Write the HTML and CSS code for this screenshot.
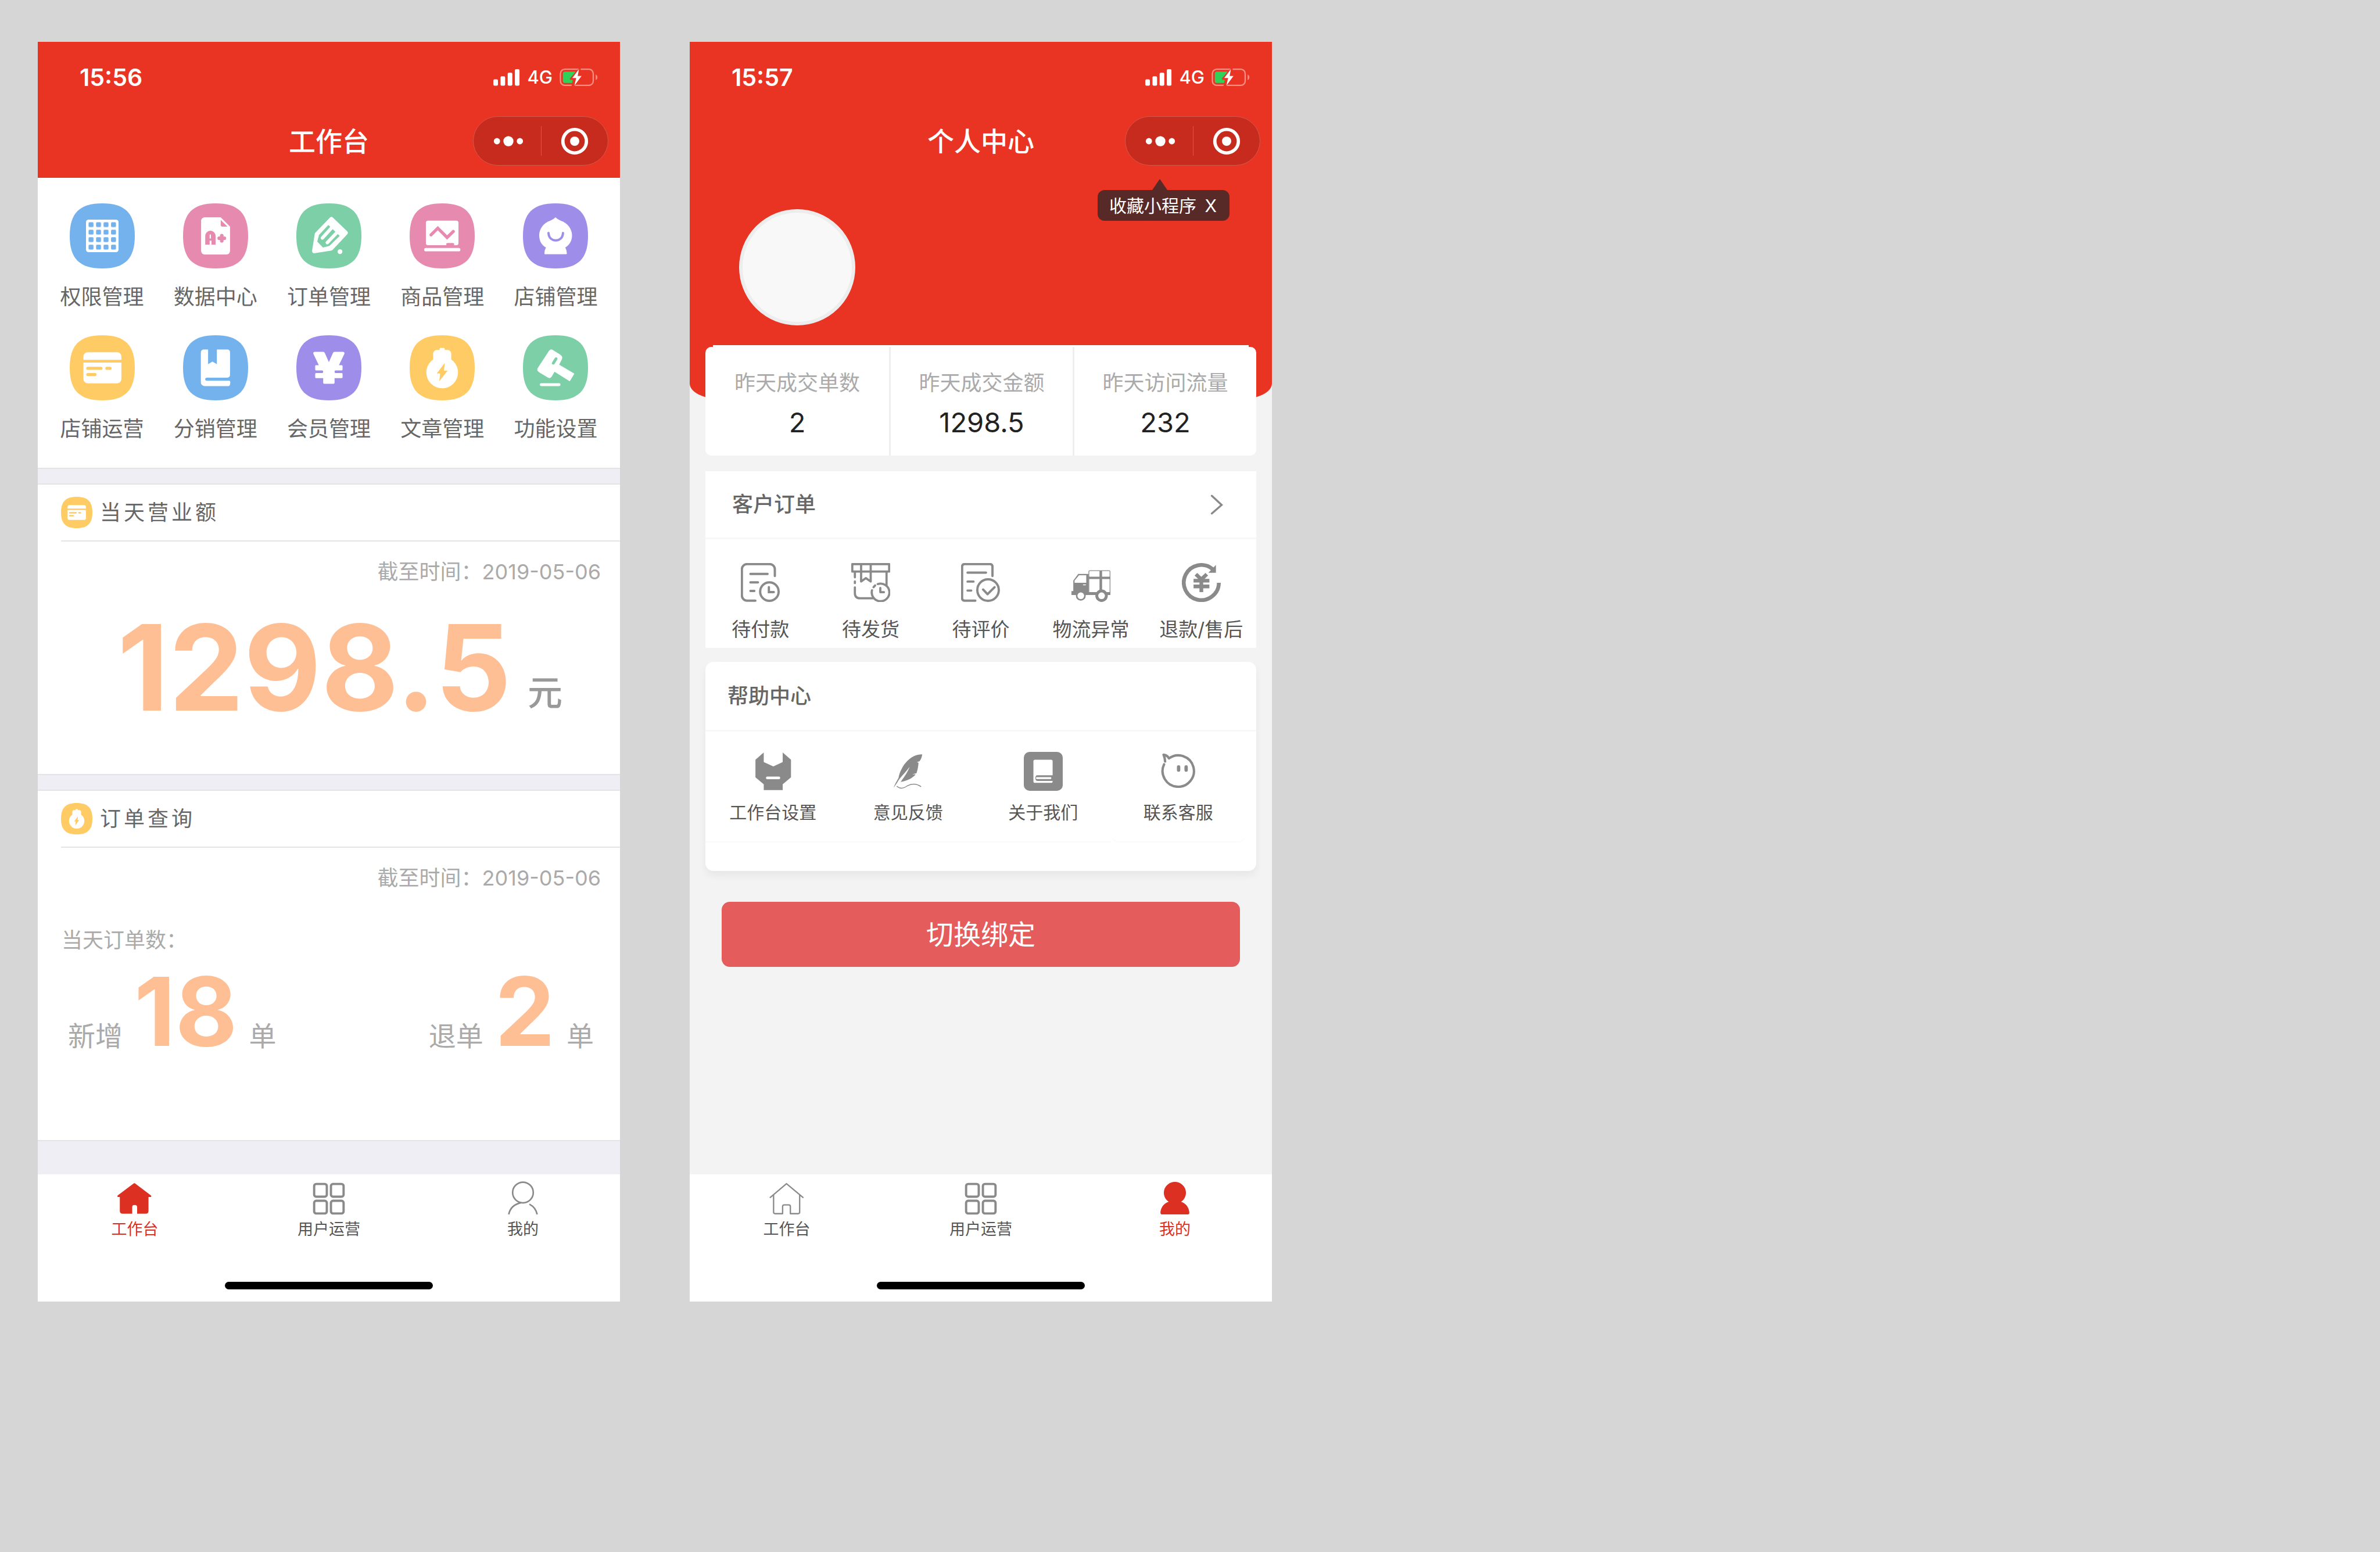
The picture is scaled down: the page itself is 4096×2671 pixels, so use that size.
FILE: index.html
```html
<!DOCTYPE html>
<html lang="zh-CN">
<head>
<meta charset="utf-8">
<title>工作台 · 个人中心</title>
<link rel="stylesheet" href="styles.css">
</head>
<body>
<svg class="sprite" aria-hidden="true">
  <defs>
    <pattern id="cells" x="36.5" y="36.5" width="14.5" height="14.5" patternUnits="userSpaceOnUse">
      <rect width="9.6" height="9.6" rx="2" fill="#73b2ed"/>
    </pattern>
  </defs>
  <symbol id="squircle" viewBox="0 0 126 126"><path d="M63 0C107 0 126 19 126 63S107 126 63 126 0 107 0 63 19 0 63 0Z"/></symbol>
  <symbol id="i-grid" viewBox="0 0 126 126">
    <rect x="31.5" y="31.5" width="63" height="63" rx="5" fill="#fff"/>
    <rect x="36" y="36" width="55" height="55" fill="url(#cells)"/>
  </symbol>
  <symbol id="i-file" viewBox="0 0 126 126">
    <path d="M42 27H73L91 45V92a7 7 0 0 1-7 7H42a7 7 0 0 1-7-7V34a7 7 0 0 1 7-7Z" fill="#fff"/>
    <path d="M73 32L86 45H76q-3 0-3-3Z" fill="currentColor"/>
    <path d="M43 80V63a10 10 0 0 1 20 0V80H55V72H51.500V80ZM51.500 61V68H54V61Q52.700 59 51.500 61Z" fill="currentColor" fill-rule="evenodd"/>
    <path d="M70 67.500H80M75 62.500V72.500" fill="none" stroke="currentColor" stroke-width="7" stroke-linecap="round"/>
  </symbol>
  <symbol id="i-pencil" viewBox="0 0 126 126">
    <path d="M68 31L95 57 67 87 35 92 40 60Z" fill="#fff" stroke="#fff" stroke-width="9" stroke-linejoin="round"/>
    <path d="M44 61L62 42 84 63 64 82.500 51.500 85.500 40.500 74Z" fill="currentColor"/>
    <path d="M50.500 67L71 44.500M60 76L81 54" stroke="#fff" stroke-width="6.500" stroke-linecap="round"/>
    <circle cx="84.500" cy="93.500" r="4.700" fill="#fff"/>
  </symbol>
  <symbol id="i-board" viewBox="0 0 126 126">
    <rect x="31.500" y="33.500" width="63" height="47.500" rx="4" fill="#fff"/>
    <path d="M41.500 61L54.500 48 72.500 66 84.500 54.500" fill="none" stroke="currentColor" stroke-width="6" stroke-linecap="round"/>
    <path d="M73 79H84" stroke="currentColor" stroke-width="4.500" stroke-linecap="round"/>
    <path d="M31.500 89.700H95" stroke="#fff" stroke-width="6.500" stroke-linecap="round"/>
  </symbol>
  <symbol id="i-shop" viewBox="0 0 126 126">
    <path d="M63 27Q67 31 73 33.500C87 38 95 50 95 62 95 73 90 81 82 85.500Q85 91 85 97 85 98.500 83.500 98.500H43Q41.500 98.500 41.500 97 41.500 91 44.500 85.500C36 81 31.500 73 31.500 62 31.500 50 39 38 53 33.500Q59 31 63 27Z" fill="#fff"/>
    <path d="M49.500 57.500C50 76.500 77 76.500 77.500 57.500" fill="none" stroke="currentColor" stroke-width="4.500" stroke-linecap="round"/>
  </symbol>
  <symbol id="i-card" viewBox="0 0 126 126">
    <path d="M26.500 47.500V41a8 8 0 0 1 8-8H92a8 8 0 0 1 8 8V47.500ZM26.500 53H100V85a8 8 0 0 1-8 8H34.500a8 8 0 0 1-8-8Z" fill="#fff"/>
    <path d="M35 64H60.500M72 64H78M35 76H49" stroke="currentColor" stroke-width="6" stroke-linecap="round"/>
  </symbol>
  <symbol id="i-book" viewBox="0 0 126 126">
    <path d="M40 27.500H48.500V56L57 51 65.500 56V27.500H86a5 5 0 0 1 5 5V77a5 5 0 0 1-5 5H46a3 3 0 0 0 0 6H89.500Q91.500 88 91.500 90.500 91.500 98.500 87.500 98.500H42a7.500 7.500 0 0 1-7.500-7.500V33a5.500 5.500 0 0 1 5.500-5.500Z" fill="#fff"/>
  </symbol>
  <symbol id="i-yen" viewBox="0 0 126 126">
    <path d="M36 32H52q2 0 3 2L63 52 71 34q1-2 3-2H90q4 0 3 4L82.500 58H88q1.500 0 1.500 2V66q0 2-1.500 2H76q-2 0-2 2.500T76 73H88q1.500 0 1.500 2V81q0 2-1.500 2H74V92q0 2-2 2H54q-2 0-2-2V83H38q-1.500 0-1.500-2V75q0-2 1.500-2H50q2 0 2-2.500T50 68H38q-1.500 0-1.500-2V60q0-2 1.500-2H43.500L33 36q-1-4 3-4Z" fill="#fff"/>
  </symbol>
  <symbol id="i-bulb" viewBox="0 0 126 126">
    <circle cx="63" cy="72" r="30.700" fill="#fff"/>
    <path d="M45.500 50V35.500a7 7 0 0 1 7-7H58V26.500a2 2 0 0 1 2-2H66a2 2 0 0 1 2 2V28.500H73.500a7 7 0 0 1 7 7V50Z" fill="#fff"/>
    <path d="M68 53.500L52.500 74H59L57.500 89 73.500 68.500H66.500Z" fill="currentColor"/>
  </symbol>
  <symbol id="i-gavel" viewBox="0 0 126 126">
    <path d="M51 30Q53.500 26.500 57 28.500L73 38.500Q77 41.500 75 46.500L69.500 57 99 74.500 90.500 88.500 61 70 55.500 79.500Q53 84 48.500 81.500L31 71Q27 68.500 28.500 64.500Z" fill="#fff" stroke="#fff" stroke-linejoin="round"/>
    <path d="M64 45.500L58.800 54" stroke="currentColor" stroke-width="5.500" stroke-linecap="round"/>
    <path d="M35.500 95.700H70" stroke="#fff" stroke-width="5.600" stroke-linecap="round"/>
  </symbol>
  <symbol id="i-signal" viewBox="0 0 52 34">
    <g fill="#fff"><rect y="21" width="9" height="12.500" rx="2.500"/><rect x="14" y="15" width="9" height="18.500" rx="2.500"/><rect x="28" y="8" width="9" height="25.500" rx="2.500"/><rect x="42" y="1" width="9" height="32.500" rx="2.500"/></g>
  </symbol>
  <symbol id="i-battery" viewBox="0 0 74 34">
    <rect x="1.300" y="1.300" width="64" height="31.400" rx="8.500" fill="none" stroke="#f58f86" stroke-width="2.600"/>
    <path d="M70 11.500Q73.500 13 73.500 17T70 22.500Z" fill="#f58f86"/>
    <path d="M10 6H31L20 22H27V28H10q-4 0-4-4V10q0-4 4-4Z" fill="#30d158"/>
    <path d="M37 0L19 20H26L23 34H29L46 13H39L41 0Z" fill="#e93323"/>
    <path d="M37.500 1L24.500 18.500H32L28.500 33.500 42.500 14.500H35Z" fill="#fff"/>
  </symbol>
  <symbol id="i-more" viewBox="0 0 58 20"><g fill="#fff"><circle cx="7" cy="10" r="6"/><circle cx="29" cy="10" r="9.700"/><circle cx="51" cy="10" r="6"/></g></symbol>
  <symbol id="i-target" viewBox="0 0 54 54"><circle cx="27" cy="27" r="22.800" fill="none" stroke="#fff" stroke-width="6.400"/><circle cx="27" cy="27" r="9" fill="#fff"/></symbol>
  <symbol id="i-home-on" viewBox="0 0 72 72">
    <path d="M33 7q2.200-2 4.400 0L67 29.500q2 2.500 0 3H62.500V60q0 5-5 5H40.500V52q0-4-4.800-4T31 52V65H12.500q-5.500 0-5.500-5V32.500H3.500q-2.500-.5-.5-3Z" fill="currentColor"/>
  </symbol>
  <symbol id="i-home" viewBox="0 0 72 72">
    <path d="M4 33.500L35.500 7 67.500 33.500M10.500 29V62q0 3 3 3H28V51q0-3 3-3H40q3 0 3 3V65H58q3 0 3-3V29" fill="none" stroke="currentColor" stroke-width="2.600" stroke-linecap="round" stroke-linejoin="round"/>
  </symbol>
  <symbol id="i-apps" viewBox="0 0 72 72">
    <g fill="none" stroke="currentColor" stroke-width="4.400"><rect x="7.500" y="7.500" width="24.500" height="24.500" rx="4"/><rect x="40" y="7.500" width="24.500" height="24.500" rx="4"/><rect x="7.500" y="40" width="24.500" height="24.500" rx="4"/><rect x="40" y="40" width="24.500" height="24.500" rx="4"/></g>
  </symbol>
  <symbol id="i-user" viewBox="0 0 72 72">
    <g fill="none" stroke="currentColor" stroke-width="3"><circle cx="36" cy="24" r="20"/><path d="M8.500 66.500Q12 48 33 43.500M48.500 46.500Q61 53 63.500 66.500"/></g>
  </symbol>
  <symbol id="i-user-on" viewBox="0 0 72 72">
    <path d="M36 3.500a21 21 0 0 1 12 38.500C58 45 63.500 54 64 63q0 3.500-3.500 3.500H11.500Q8 66.500 8 63C8.500 54 14 45 24 42A21 21 0 0 1 36 3.500Z" fill="currentColor"/>
  </symbol>
  <symbol id="i-chevron" viewBox="0 0 26 40"><path d="M3 2L23 20.500 3 38" fill="none" stroke="#8a8a8a" stroke-width="4" stroke-linecap="round"/></symbol>

  <symbol id="o-pay" viewBox="0 0 75 75">
    <g fill="none" stroke="currentColor" stroke-width="4.400" stroke-linecap="round"><path d="M65.500 25V12a10 10 0 0 0-10-10H12A10 10 0 0 0 2 12V62.500a10 10 0 0 0 10 10H28"/><path d="M18.500 21H51.500M18.500 37.300H33M18.500 53.700H26"/><circle cx="55" cy="55" r="17.800"/><path d="M54 46.500V56H63.500"/></g>
  </symbol>
  <symbol id="o-ship" viewBox="0 0 75 75">
    <g fill="none" stroke="currentColor" stroke-width="4.200" stroke-linecap="round" stroke-linejoin="round"><path d="M2 2H73V16.500H2ZM19 2V35.500L28 29 37.500 35.500V2" stroke-linecap="butt"/><path d="M7 17V27.500M7 35.500V38.500M7 47V58q0 10 10 10H43M68 17V43M51 40.500A17 17 0 1 1 40 52.500M46 43L43 46.500M56 48V56H63"/></g>
  </symbol>
  <symbol id="o-rate" viewBox="0 0 75 75">
    <g fill="none" stroke="currentColor" stroke-width="4.400" stroke-linecap="round" stroke-linejoin="round"><path d="M60.500 25V7q0-5-5-5H7Q2 2 2 7V67.500q0 5 5 5H27.500"/><path d="M12.500 18.500H48M12.500 35.700H24M12.500 53H19.500"/><circle cx="52" cy="52" r="20.700"/><path d="M42.500 51L51 60 64.500 46.500"/></g>
  </symbol>
  <symbol id="o-truck" viewBox="0 0 75 75">
    <path d="M3.500 54V34L13 21H33V56H75V61.500H0V54Z" fill="currentColor"/>
    <path d="M6 38V34L14.500 23.500H28.500V38Z" fill="#fff"/><path d="M23 42H27" stroke="#fff" stroke-width="1.800" stroke-linecap="round"/>
    <circle cx="58" cy="63" r="12" fill="currentColor"/>
    <path d="M33.500 56V16.500q0-1.800 2-1.800H72.500q1.800 0 1.800 1.800V56" fill="none" stroke="currentColor" stroke-width="1.500"/>
    <path d="M56.500 14.700V54" stroke="currentColor" stroke-width="5"/><path d="M33 28.500H74" stroke="currentColor" stroke-width="4.500"/>
    <g fill="#fff" stroke="currentColor" stroke-width="3"><circle cx="18" cy="63" r="8"/><circle cx="58" cy="63" r="8"/></g>
  </symbol>
  <symbol id="o-refund" viewBox="0 0 75 75">
    <path d="M71.300 38A33.800 33.800 0 1 1 59 11.500" fill="none" stroke="currentColor" stroke-width="7.400"/>
    <path d="M65.600 3.500V18.700H51Z" fill="currentColor"/>
    <path d="M27 21.500L37.500 31.500 48 21.500M37.500 30V56M22.500 34H53M22.500 45H53" fill="none" stroke="currentColor" stroke-width="7.200"/>
  </symbol>

  <symbol id="h-tool" viewBox="0 0 75 75">
    <path d="M3.500 15L19.500 1V19.700L38 28 56 19.700V1L72 15V49L56 62.300V73.700H19.500V62.300L3.500 49Z" fill="currentColor"/>
    <rect x="24" y="47.500" width="27" height="5.200" rx="2" fill="#fff"/>
  </symbol>
  <symbol id="h-feather" viewBox="0 0 75 75">
    <path d="M65 4.700C50 4 38 14 30 25 23 36 20.500 44 19.500 50 16 56 12 63 10 69L17 59C22 49 32 41 41 28.500 36 42 28 51 23.500 58 38 56 48 49 52.500 43.500L46 43 54 41C56 36 57.500 28 58 21L55 20 60 18C63 14 65 8 65 4.700Z" fill="currentColor"/>
    <path d="M16 66Q25 74 36 65.500 50 58 63 67" fill="none" stroke="currentColor" stroke-width="1.600"/>
  </symbol>
  <symbol id="h-about" viewBox="0 0 75 75">
    <rect width="75" height="75" rx="11" fill="currentColor"/>
    <rect x="18.500" y="15" width="37" height="44.700" rx="3" fill="#fff"/>
    <path d="M56 45H26q-3.700 0-3.700 5.500T26 56H56Z" fill="currentColor"/>
    <rect x="23.500" y="48.700" width="29.500" height="3.500" rx="1.500" fill="#fff"/>
  </symbol>
  <symbol id="h-face" viewBox="0 0 75 75">
    <path d="M12.500 18.500Q12 11 9.500 5.500 16 6 20 12.500A30.200 30.200 0 1 1 10.500 24" fill="none" stroke="currentColor" stroke-width="4.600" stroke-linecap="round" stroke-linejoin="round"/>
    <path d="M38.500 29V35M53 29V35" stroke="currentColor" stroke-width="6.500" stroke-linecap="round"/>
  </symbol>
</svg>

<main class="board">
  <section class="phone" aria-label="工作台">
    <header class="header">
      <div class="status">
        <time class="clock">15:56</time>
        <div class="signals">
          <svg class="signal"><use href="#i-signal"/></svg>
          <span>4G</span>
          <svg class="battery"><use href="#i-battery"/></svg>
        </div>
      </div>
      <div class="navbar">
        <h1 class="nav-title">工作台</h1>
        <div class="capsule">
          <button type="button" class="capsule-btn" aria-label="更多"><svg class="more"><use href="#i-more"/></svg></button>
          <button type="button" class="capsule-btn" aria-label="关闭"><svg class="target"><use href="#i-target"/></svg></button>
        </div>
      </div>
    </header>

    <nav class="launcher" aria-label="功能">
      <a class="app" href="#"><span class="tile blue"><svg><use href="#squircle"/></svg><svg><use href="#i-grid"/></svg></span>权限管理</a>
      <a class="app" href="#"><span class="tile pink"><svg><use href="#squircle"/></svg><svg><use href="#i-file"/></svg></span>数据中心</a>
      <a class="app" href="#"><span class="tile green"><svg><use href="#squircle"/></svg><svg><use href="#i-pencil"/></svg></span>订单管理</a>
      <a class="app" href="#"><span class="tile pink"><svg><use href="#squircle"/></svg><svg><use href="#i-board"/></svg></span>商品管理</a>
      <a class="app" href="#"><span class="tile purple"><svg><use href="#squircle"/></svg><svg><use href="#i-shop"/></svg></span>店铺管理</a>
      <a class="app" href="#"><span class="tile yellow"><svg><use href="#squircle"/></svg><svg><use href="#i-card"/></svg></span>店铺运营</a>
      <a class="app" href="#"><span class="tile blue"><svg><use href="#squircle"/></svg><svg><use href="#i-book"/></svg></span>分销管理</a>
      <a class="app" href="#"><span class="tile purple"><svg><use href="#squircle"/></svg><svg><use href="#i-yen"/></svg></span>会员管理</a>
      <a class="app" href="#"><span class="tile yellow"><svg><use href="#squircle"/></svg><svg><use href="#i-bulb"/></svg></span>文章管理</a>
      <a class="app" href="#"><span class="tile green"><svg><use href="#squircle"/></svg><svg><use href="#i-gavel"/></svg></span>功能设置</a>
    </nav>

    <section class="report">
      <h2 class="report-head"><span class="tile small yellow"><svg><use href="#squircle"/></svg><svg><use href="#i-card"/></svg></span>当天营业额</h2>
      <p class="until">截至时间：2019-05-06</p>
      <p class="turnover"><strong>1298.5</strong><span>元</span></p>
    </section>

    <section class="report">
      <h2 class="report-head"><span class="tile small yellow"><svg><use href="#squircle"/></svg><svg><use href="#i-bulb"/></svg></span>订单查询</h2>
      <p class="until">截至时间：2019-05-06</p>
      <p class="count-label">当天订单数：</p>
      <div class="counts">
        <p class="count">新增<strong>18</strong>单</p>
        <p class="count">退单<strong>2</strong>单</p>
      </div>
    </section>

    <footer class="bottom">
      <nav class="tabs" aria-label="标签栏">
        <a class="tab on" href="#"><svg><use href="#i-home-on"/></svg>工作台</a>
        <a class="tab" href="#"><svg><use href="#i-apps"/></svg>用户运营</a>
        <a class="tab" href="#"><svg><use href="#i-user"/></svg>我的</a>
      </nav>
      <div class="home-bar"></div>
    </footer>
  </section>

  <section class="phone profile" aria-label="个人中心">
    <div class="hero">
      <header class="header">
        <div class="status">
          <time class="clock">15:57</time>
          <div class="signals">
            <svg class="signal"><use href="#i-signal"/></svg>
            <span>4G</span>
            <svg class="battery"><use href="#i-battery"/></svg>
          </div>
        </div>
        <div class="navbar">
          <h1 class="nav-title">个人中心</h1>
          <div class="capsule">
            <button type="button" class="capsule-btn" aria-label="更多"><svg class="more"><use href="#i-more"/></svg></button>
            <button type="button" class="capsule-btn" aria-label="关闭"><svg class="target"><use href="#i-target"/></svg></button>
          </div>
        </div>
        <button type="button" class="tip"><span>收藏小程序</span><span>X</span></button>
      </header>
      <div class="avatar"></div>
    </div>

    <dl class="stats">
      <div class="stat"><dt>昨天成交单数</dt><dd>2</dd></div>
      <div class="stat"><dt>昨天成交金额</dt><dd>1298.5</dd></div>
      <div class="stat"><dt>昨天访问流量</dt><dd>232</dd></div>
    </dl>

    <section class="panel orders">
      <a class="panel-head" href="#"><h2>客户订单</h2><svg class="chevron"><use href="#i-chevron"/></svg></a>
      <nav class="order-row" aria-label="客户订单">
        <a class="order" href="#"><svg><use href="#o-pay"/></svg>待付款</a>
        <a class="order" href="#"><svg><use href="#o-ship"/></svg>待发货</a>
        <a class="order" href="#"><svg><use href="#o-rate"/></svg>待评价</a>
        <a class="order" href="#"><svg><use href="#o-truck"/></svg>物流异常</a>
        <a class="order" href="#"><svg><use href="#o-refund"/></svg>退款/售后</a>
      </nav>
    </section>

    <section class="panel help">
      <div class="panel-head"><h2>帮助中心</h2></div>
      <nav class="help-row" aria-label="帮助中心">
        <a class="help-item" href="#"><svg><use href="#h-tool"/></svg>工作台设置</a>
        <a class="help-item" href="#"><svg><use href="#h-feather"/></svg>意见反馈</a>
        <a class="help-item" href="#"><svg><use href="#h-about"/></svg>关于我们</a>
        <button type="button" class="help-item contact"><svg><use href="#h-face"/></svg>联系客服</button>
      </nav>
    </section>

    <button type="button" class="switch">切换绑定</button>

    <footer class="bottom">
      <nav class="tabs" aria-label="标签栏">
        <a class="tab" href="#"><svg><use href="#i-home"/></svg>工作台</a>
        <a class="tab" href="#"><svg><use href="#i-apps"/></svg>用户运营</a>
        <a class="tab on" href="#"><svg><use href="#i-user-on"/></svg>我的</a>
      </nav>
      <div class="home-bar"></div>
    </footer>
  </section>
</main>
</body>
</html>
```
FILE: styles.css
```css
* {
  box-sizing: border-box;
}

body {
  margin: 0;
  min-height: 100vh;
  background: #d6d6d6;
  color: #666;
  font-family: Inter, "Noto Sans CJK SC", sans-serif;
  font-size: 36px;
  line-height: 44px;
}

h1, h2, p, dl, dd {
  margin: 0;
  font-weight: 400;
  font-size: inherit;
}

a {
  color: inherit;
  text-decoration: none;
}

button {
  padding: 0;
  border: 0;
  background: none;
  color: inherit;
  font: inherit;
}

svg {
  display: block;
}

.sprite {
  position: absolute;
  width: 0;
  height: 0;
}

.board {
  display: grid;
  grid-template-columns: 501fr 501fr 861fr;
  column-gap: 120px;
  padding: 72px 65px;
}

.phone {
  display: flex;
  flex-direction: column;
  background: #efeef4;
}

.profile {
  background: #f3f3f3;
}

/* Status bar and navigation */

.header {
  position: relative;
  padding: 41px 20px 21px;
  background: #e93323;
  color: #fff;
}

.status {
  display: flex;
  align-items: center;
  justify-content: space-between;
  height: 40px;
  margin-bottom: 47px;
  padding: 0 18px 0 52px;
}

.clock {
  font-size: 41px;
  font-weight: 600;
}

.signals {
  display: flex;
  align-items: center;
  gap: 12px;
  font-size: 31px;
  font-weight: 500;
}

.signal {
  width: 46px;
  height: 30px;
}

.battery {
  width: 66px;
  height: 30px;
}

.navbar {
  display: grid;
  grid-template-columns: 1fr auto 1fr;
  align-items: center;
}

.nav-title {
  grid-column: 2;
  font-size: 46px;
  font-weight: 500;
}

.capsule {
  display: grid;
  grid-template-columns: 1fr 1fr;
  justify-self: end;
  width: 233px;
  height: 85px;
  padding: 16px 0;
  border: 1px solid #d5584c;
  border-radius: 43px;
  background: #c62b1d;
}

.capsule-btn {
  display: grid;
  place-items: center;
}

.capsule-btn + .capsule-btn {
  border-left: 1px solid #d5584c;
}

.more {
  width: 52px;
  height: 18px;
  margin-left: 4px;
}

.target {
  width: 48px;
  height: 48px;
}

/* Launcher */

.launcher {
  display: grid;
  grid-template-columns: repeat(5, 1fr);
  row-gap: 41px;
  padding: 44px 13px 42px;
  border-bottom: 2px solid #e4e4e6;
  background: #fff;
}

.app {
  display: flex;
  flex-direction: column;
  align-items: center;
  gap: 27px;
  padding-bottom: 3px;
}

.tile {
  display: grid;
  width: 112px;
  height: 112px;
}

.tile svg {
  grid-area: 1 / 1;
  width: 100%;
  height: 100%;
}

.tile svg:first-child {
  fill: currentColor;
}

.tile.small {
  width: 54px;
  height: 54px;
}

.blue { color: #73b2ed; }
.pink { color: #e68ab0; }
.green { color: #7ccfa7; }
.purple { color: #9f8dea; }
.yellow { color: #ffcb64; }

/* Report cards */

.report {
  margin-top: 25px;
  padding-bottom: 84px;
  border-top: 2px solid #e4e4e6;
  border-bottom: 2px solid #e4e4e6;
  background: #fff;
}

.report + .report {
  padding-bottom: 141px;
}

.report-head {
  display: flex;
  align-items: center;
  gap: 13px;
  height: 98px;
  margin-left: 40px;
  border-bottom: 2px solid #e4e4e6;
  letter-spacing: 5px;
}

.until {
  padding: 30px 33px 0;
  color: #aaa;
  text-align: right;
}

.turnover {
  display: flex;
  align-items: flex-end;
  justify-content: center;
  gap: 28px;
  margin-top: 42px;
  padding-left: 38px;
  color: #ffbf95;
  font-size: 205px;
  line-height: 200px;
}

.turnover span {
  color: #999;
  font-size: 60px;
  font-weight: 500;
  line-height: 112px;
}

.count-label {
  margin-top: 63px;
  padding-left: 41px;
  color: #aaa;
}

.counts {
  display: flex;
  justify-content: space-between;
  margin-top: 21px;
  padding: 0 45px 0 52px;
}

.count {
  display: flex;
  align-items: baseline;
  gap: 20px;
  color: #aaa;
  font-size: 47px;
  line-height: 56px;
}

.count strong {
  color: #ffbf95;
  font-size: 164px;
  line-height: 160px;
}

/* Tab bar */

.bottom {
  margin-top: auto;
  padding: 10px 0 21px;
  background: #fff;
}

.report ~ .bottom {
  margin-top: 57px;
}

.tabs {
  display: grid;
  grid-template-columns: repeat(3, 1fr);
}

.tab {
  display: flex;
  flex-direction: column;
  align-items: center;
  gap: 5px;
  color: #555;
  font-size: 27px;
  line-height: 32px;
}

.tab svg {
  width: 64px;
  height: 64px;
  color: #8a8a8a;
}

.tab.on,
.tab.on svg {
  color: #dc3022;
}

.home-bar {
  width: 358px;
  height: 13px;
  margin: 74px auto 0;
  border-radius: 7px;
  background: #000;
}

/* Profile */

.hero {
  padding-bottom: 127px;
  border-radius: 0 0 53px 53px / 0 0 27px 27px;
  background: #e93323;
}

.tip {
  position: absolute;
  top: 255px;
  right: 73px;
  display: flex;
  align-items: center;
  justify-content: space-between;
  width: 227px;
  height: 53px;
  padding: 0 22px 0 20px;
  border-radius: 12px;
  background: #572a28;
  font-size: 30px;
}

.tip::before {
  position: absolute;
  top: -19px;
  left: 94px;
  border: solid transparent;
  border-width: 0 13px 19px;
  border-bottom-color: #572a28;
  content: "";
}

.avatar {
  width: 200px;
  height: 200px;
  margin: 54px 0 0 85px;
  border: 6px solid #ededed;
  border-radius: 50%;
  background: #f8f8f8;
}

.stats {
  position: relative;
  display: grid;
  grid-template-columns: repeat(3, 1fr);
  margin: -90px 27px 0;
  border-radius: 10px;
  background: #fff;
}

.stats::before {
  position: absolute;
  top: -3px;
  right: 13px;
  left: 13px;
  height: 3px;
  background: #fff;
  content: "";
}

.stat {
  display: flex;
  flex-direction: column;
  align-items: center;
  gap: 18px;
  padding: 40px 0 29px;
  color: #aaa;
}

.stat + .stat {
  border-left: 3px solid #eee;
}

.stat dd {
  color: #222;
  font-size: 47px;
  line-height: 56px;
}

.panel {
  margin: 27px 27px 0;
  background: #fff;
}

.panel-head {
  display: flex;
  align-items: center;
  justify-content: space-between;
  height: 117px;
  padding: 0 57px 0 46px;
  border-bottom: 3px solid #f8f8f8;
}

.panel-head h2 {
  font-weight: 500;
}

.chevron {
  width: 22px;
  height: 35px;
}

.order-row {
  display: grid;
  grid-template-columns: repeat(5, 1fr);
  padding: 41px 0 10px;
}

.order {
  display: flex;
  flex-direction: column;
  align-items: center;
  gap: 25px;
  color: #555;
  font-size: 33px;
  white-space: nowrap;
}

.order svg,
.help-item svg {
  width: 67px;
  height: 67px;
  color: #8a8a8a;
}

.help {
  margin-top: 24px;
  padding-bottom: 49px;
  border-radius: 14px;
  box-shadow: 0 8px 14px rgba(0, 0, 0, 0.05);
}

.help .panel-head {
  height: 120px;
  padding-left: 38px;
}

.help-row {
  display: grid;
  grid-template-columns: repeat(4, 1fr);
  padding-right: 18px;
}

.help-item {
  display: flex;
  flex-direction: column;
  align-items: center;
  gap: 17px;
  padding: 35px 0 30px;
  border-bottom: 2px solid #fafafa;
  color: #555;
  font-size: 30px;
  line-height: 40px;
}

.contact {
  border-radius: 14px;
}

.switch {
  height: 112px;
  margin: 53px 55px 0;
  border-radius: 14px;
  background: #e55c5c;
  color: #fff;
  font-size: 47px;
}
```
